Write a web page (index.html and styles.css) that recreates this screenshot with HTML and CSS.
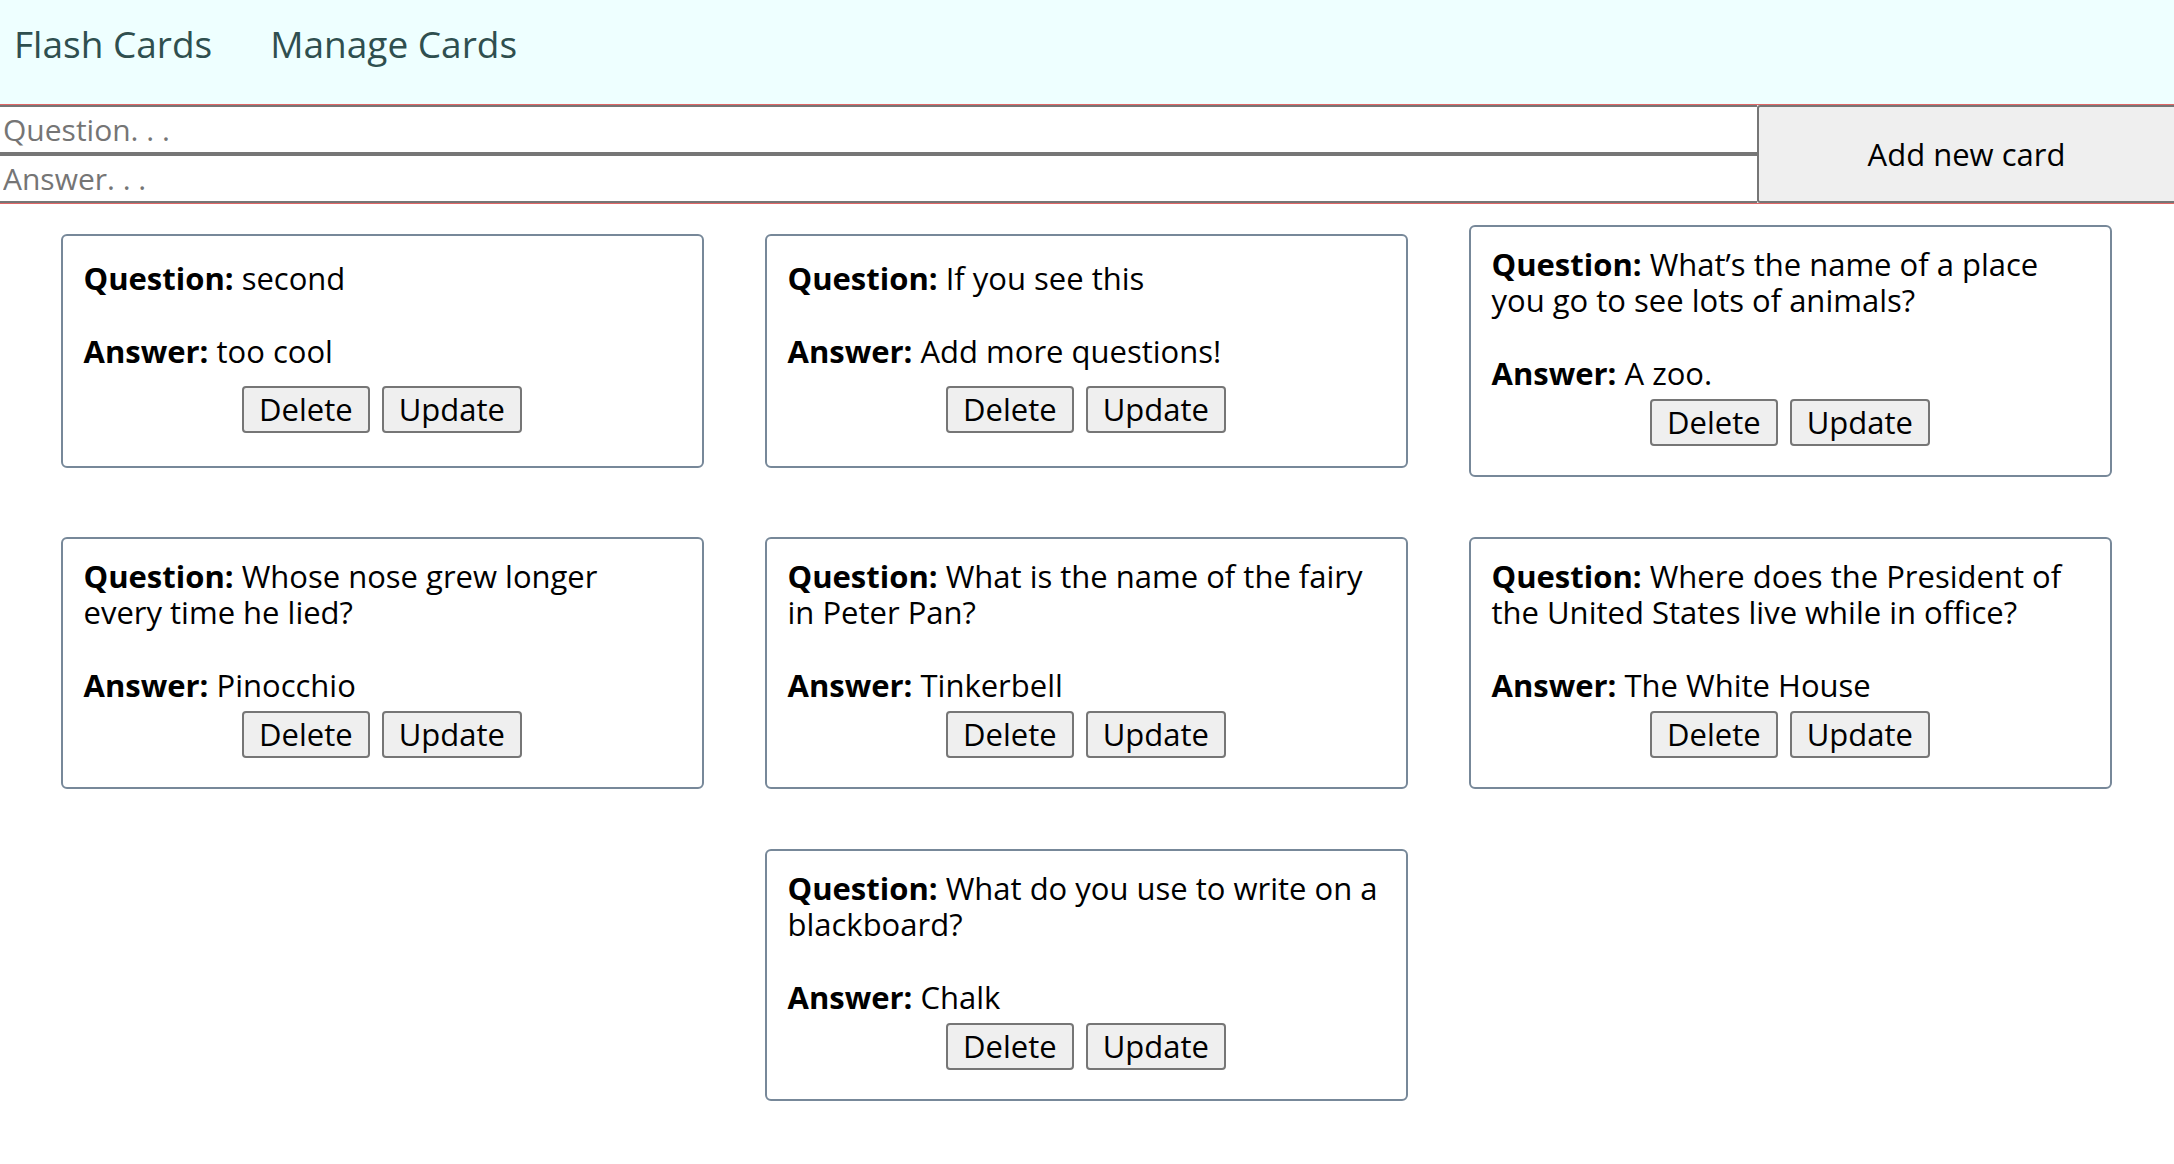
FILE: index.html
```html
<!DOCTYPE html>
<html lang="en">
<head>
<meta charset="utf-8">
<title>Flash Cards</title>
<link rel="stylesheet" href="styles.css">
</head>
<body>
<header class="nav">
  <a class="nav-link" href="#">Flash Cards</a>
  <a class="nav-link" href="#">Manage Cards</a>
</header>
<form class="new-card">
  <div class="fields">
    <input class="field" type="text" placeholder="Question. . .">
    <input class="field" type="text" placeholder="Answer. . .">
  </div>
  <button class="add-btn" type="button">Add new card</button>
</form>
<main class="cards">
  <div class="card">
    <div class="card-text">
      <p class="q"><b>Question:</b> second</p>
      <p class="a"><b>Answer:</b> too cool</p>
    </div>
    <div class="actions"><button class="btn" type="button">Delete</button><button class="btn" type="button">Update</button></div>
  </div>
  <div class="card">
    <div class="card-text">
      <p class="q"><b>Question:</b> If you see this</p>
      <p class="a"><b>Answer:</b> Add more questions!</p>
    </div>
    <div class="actions"><button class="btn" type="button">Delete</button><button class="btn" type="button">Update</button></div>
  </div>
  <div class="card">
    <div class="card-text">
      <p class="q"><b>Question:</b> What’s the name of a place you go to see lots of animals?</p>
      <p class="a"><b>Answer:</b> A zoo.</p>
    </div>
    <div class="actions"><button class="btn" type="button">Delete</button><button class="btn" type="button">Update</button></div>
  </div>
  <div class="card">
    <div class="card-text">
      <p class="q"><b>Question:</b> Whose nose grew longer every time he lied?</p>
      <p class="a"><b>Answer:</b> Pinocchio</p>
    </div>
    <div class="actions"><button class="btn" type="button">Delete</button><button class="btn" type="button">Update</button></div>
  </div>
  <div class="card">
    <div class="card-text">
      <p class="q"><b>Question:</b> What is the name of the fairy in Peter Pan?</p>
      <p class="a"><b>Answer:</b> Tinkerbell</p>
    </div>
    <div class="actions"><button class="btn" type="button">Delete</button><button class="btn" type="button">Update</button></div>
  </div>
  <div class="card">
    <div class="card-text">
      <p class="q"><b>Question:</b> Where does the President of the United States live while in office?</p>
      <p class="a"><b>Answer:</b> The White House</p>
    </div>
    <div class="actions"><button class="btn" type="button">Delete</button><button class="btn" type="button">Update</button></div>
  </div>
  <div class="card">
    <div class="card-text">
      <p class="q"><b>Question:</b> What do you use to write on a blackboard?</p>
      <p class="a"><b>Answer:</b> Chalk</p>
    </div>
    <div class="actions"><button class="btn" type="button">Delete</button><button class="btn" type="button">Update</button></div>
  </div>
</main>
</body>
</html>
```

FILE: styles.css
```css
* { box-sizing: border-box; }

body {
  margin: 0;
  font-family: "Open Sans", sans-serif;
  color: #000;
  background: #fff;
}

.nav {
  height: 104px;
  background: #eeffff;
  display: flex;
  align-items: flex-start;
  gap: 58px;
  padding: 22px 0 0 14px;
}

.nav-link {
  font-size: 37px;
  line-height: 44px;
  color: #2f4f4f;
  text-decoration: none;
}

.new-card {
  display: grid;
  grid-template-columns: 1fr 417px;
  border-top: 1px solid #e06666;
  border-bottom: 1px solid #e06666;
}

.fields {
  display: flex;
  flex-direction: column;
}

.field {
  height: 49px;
  margin: 0;
  padding: 0 3px;
  border: 2px solid #767676;
  border-left: 0;
  border-right: 0;
  font-family: inherit;
  font-size: 30px;
  color: #000;
  background: #fff;
  outline: none;
}

.field::placeholder { color: #757575; }

.add-btn {
  margin: 0;
  border: 2px solid #767676;
  border-right: 0;
  border-radius: 3px 0 0 3px;
  background: #efefef;
  font-family: inherit;
  font-size: 31px;
  color: #000;
}

.cards {
  display: flex;
  flex-wrap: wrap;
  justify-content: center;
  align-items: center;
  gap: 60px 61px;
  padding: 21px 2px 40px 0;
}

.card {
  width: 643px;
  min-height: 234px;
  border: 2px solid #778899;
  border-radius: 6px;
  padding: 19px 21px 29px;
  display: flex;
  flex-direction: column;
  justify-content: space-around;
}

.card-text p {
  margin: 0;
  font-size: 31px;
  line-height: 36px;
}

.card-text .q { margin-bottom: 37px; }

.actions {
  display: flex;
  justify-content: center;
  gap: 12px;
  margin-top: 8px;
}

.btn {
  margin: 0;
  padding: 3px 15px;
  border: 2px solid #767676;
  border-radius: 4px;
  background: #efefef;
  font-family: inherit;
  font-size: 31px;
  line-height: 37px;
  color: #000;
}
```
